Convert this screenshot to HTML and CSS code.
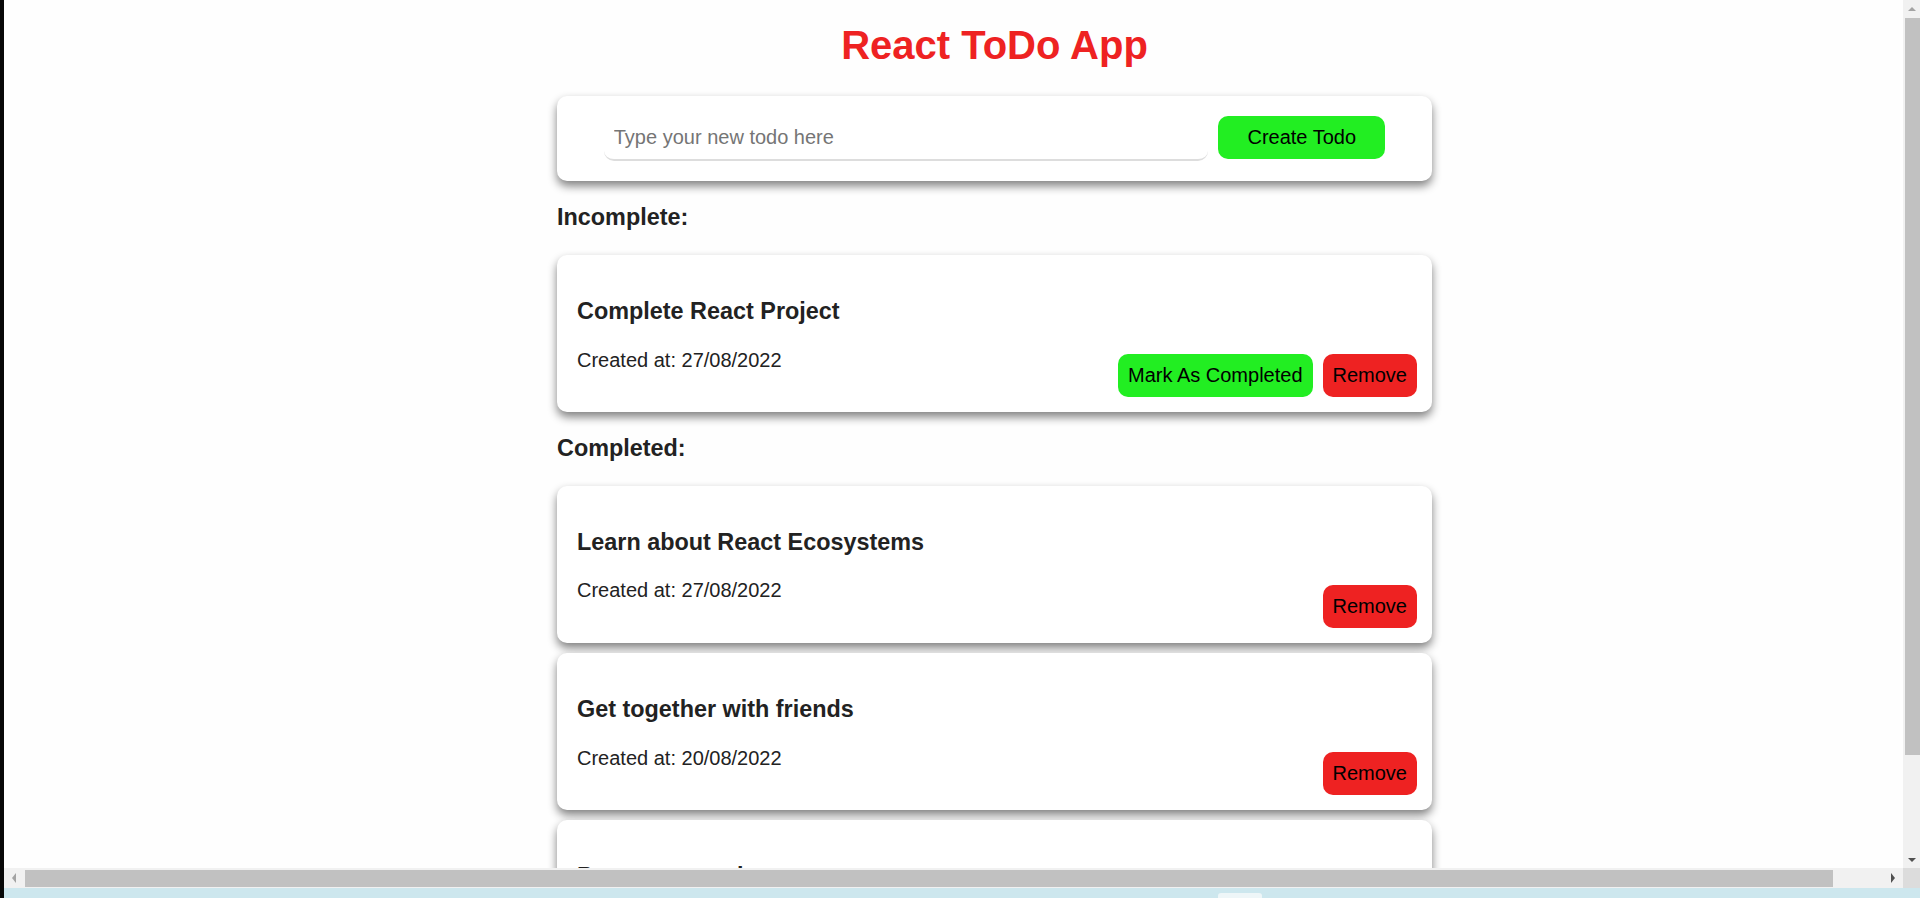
FILE: index.html
```html
<!DOCTYPE html>
<html lang="en">
<head>
<meta charset="utf-8">
<title>React ToDo App</title>
<link rel="stylesheet" href="styles.css">
</head>
<body>
<div class="screen">
  <div class="edge"></div>
  <div class="viewport">
    <div class="page">
      <div class="app">
        <h1 class="app-title">React ToDo App</h1>
        <div class="list-wrapper">
          <div class="new-todo-form"><input class="new-todo-input" type="text" placeholder="Type your new todo here"><button class="new-todo-button">Create Todo</button></div>
          <h3 class="section-title">Incomplete:</h3>
          <div class="todo-item">
            <h3 class="todo-title">Complete React Project</h3>
            <div class="todo-footer">
              <p class="todo-date">Created at: 27/08/2022</p>
              <div class="todo-actions">
                <button class="btn btn-complete">Mark As Completed</button>
                <button class="btn btn-remove">Remove</button>
              </div>
            </div>
          </div>
          <h3 class="section-title">Completed:</h3>
          <div class="todo-item">
            <h3 class="todo-title">Learn about React Ecosystems</h3>
            <div class="todo-footer">
              <p class="todo-date">Created at: 27/08/2022</p>
              <div class="todo-actions">
                <button class="btn btn-remove">Remove</button>
              </div>
            </div>
          </div>
          <div class="todo-item">
            <h3 class="todo-title">Get together with friends</h3>
            <div class="todo-footer">
              <p class="todo-date">Created at: 20/08/2022</p>
              <div class="todo-actions">
                <button class="btn btn-remove">Remove</button>
              </div>
            </div>
          </div>
          <div class="todo-item">
            <h3 class="todo-title">Prepare a meal</h3>
            <div class="todo-footer">
              <p class="todo-date">Created at: 20/08/2022</p>
              <div class="todo-actions">
                <button class="btn btn-remove">Remove</button>
              </div>
            </div>
          </div>
        </div>
      </div>
    </div>
  </div>
  <div class="vscroll">
    <div class="sb-btn sb-btn-v"><span class="arrow arrow-up"></span></div>
    <div class="vtrack"><div class="vthumb"></div></div>
    <div class="sb-btn sb-btn-v"><span class="arrow arrow-down"></span></div>
  </div>
  <div class="hscroll">
    <div class="sb-btn sb-btn-left"><span class="arrow arrow-left"></span></div>
    <div class="htrack"><div class="hthumb"></div></div>
    <div class="sb-btn sb-btn-right"><span class="arrow arrow-right"></span></div>
  </div>
  <div class="corner"></div>
  <div class="taskbar"><span class="taskbar-item"></span></div>
</div>
</body>
</html>
```
FILE: styles.css
```css
html, body {
  margin: 0;
  padding: 0;
  height: 100%;
  overflow: hidden;
  background: #fff;
}

body {
  font-family: "Liberation Sans", Arial, sans-serif;
  font-size: 20px;
}

.screen {
  display: grid;
  grid-template-columns: 4px 1899px 17px;
  grid-template-rows: 868px 20px 10px;
  width: 1920px;
  height: 898px;
}

.edge {
  grid-column: 1;
  grid-row: 1 / 4;
  background: #080808;
}

.viewport {
  grid-column: 2;
  grid-row: 1;
  overflow: hidden;
  background: #fefefe;
}

.page {
  width: 1981px;
  padding-top: 22px;
  color: #222222;
}

.app-title {
  margin: 0 0 28px;
  text-align: center;
  color: #ee2222;
  font-size: 40px;
  line-height: 46px;
  font-weight: bold;
}

.list-wrapper {
  max-width: 875px;
  margin: 0 auto;
}

.new-todo-form {
  background: #fff;
  border-radius: 10px;
  padding: 20px;
  text-align: center;
  box-shadow: 0 5px 10px grey;
}

.new-todo-input {
  font-family: "Liberation Sans", Arial, sans-serif;
  font-size: 20px;
  padding: 10px;
  border: none;
  border-bottom: 2px solid #ddd;
  border-radius: 10px;
  width: 70%;
  outline: none;
  background: #fff;
  color: #222;
}

.new-todo-input::placeholder {
  color: #757575;
}

.new-todo-button {
  font-family: "Liberation Sans", Arial, sans-serif;
  font-size: 20px;
  padding: 10px;
  border: none;
  border-radius: 10px;
  margin-left: 10px;
  width: 20%;
  background: #22ee22;
  color: #000;
}

.section-title {
  font-size: 23.4px;
  margin: 23.4px 0;
}

.todo-item {
  background: #fff;
  border-radius: 10px;
  margin-top: 10px;
  padding: 20px 15px 15px 20px;
  box-shadow: 0 5px 10px grey;
}

.todo-title {
  font-size: 23.4px;
  margin: 23.4px 0 0;
}

.todo-footer {
  display: flex;
  justify-content: space-between;
  align-items: flex-end;
  margin-top: 23.4px;
}

.todo-date {
  align-self: flex-start;
  margin: 0 0 25.3px;
  font-size: 20px;
}

.todo-actions {
  display: flex;
  gap: 10px;
}

.btn {
  font-family: "Liberation Sans", Arial, sans-serif;
  font-size: 20px;
  padding: 10px;
  border: none;
  border-radius: 10px;
  color: #000;
}

.btn-complete {
  background: #22ee22;
}

.btn-remove {
  background: #ee2222;
}

/* window chrome: scrollbars and taskbar strip */
.vscroll {
  grid-column: 3;
  grid-row: 1;
  background: #f1f1f1;
  display: flex;
  flex-direction: column;
}

.sb-btn {
  display: flex;
  align-items: center;
  justify-content: center;
  flex: none;
}

.sb-btn-v {
  height: 17px;
}

.vtrack {
  flex: 1;
}

.vthumb {
  margin: 1px 0 0 2px;
  height: 737px;
  background: #c1c1c1;
}

.hscroll {
  grid-column: 2;
  grid-row: 2;
  background: #f1f1f1;
  display: flex;
}

.sb-btn-left {
  width: 20px;
}

.sb-btn-right {
  width: 21px;
}

.htrack {
  flex: 1;
}

.hthumb {
  margin: 2px 0 0 1px;
  width: 1808px;
  height: 17px;
  background: #c1c1c1;
}

.arrow {
  width: 0;
  height: 0;
  border: 4px solid transparent;
}

.arrow-up {
  border-top: none;
  border-bottom-color: #a3a3a3;
}

.arrow-down {
  border-bottom: none;
  border-top-color: #505050;
}

.arrow-left {
  border-left: none;
  border-right-color: #a3a3a3;
  border-width: 5px 4px 5px 0;
}

.arrow-right {
  border-right: none;
  border-left-color: #505050;
  border-width: 5px 0 5px 4px;
}

.corner {
  grid-column: 3;
  grid-row: 2;
  background: #dcdcdc;
}

.taskbar {
  grid-column: 2 / 4;
  grid-row: 3;
  background: #cde7ee;
  display: flex;
  align-items: flex-end;
}

.taskbar-item {
  margin-left: 1214px;
  width: 44px;
  height: 5px;
  border-radius: 3px 3px 0 0;
  background: #eef6f8;
}
```
